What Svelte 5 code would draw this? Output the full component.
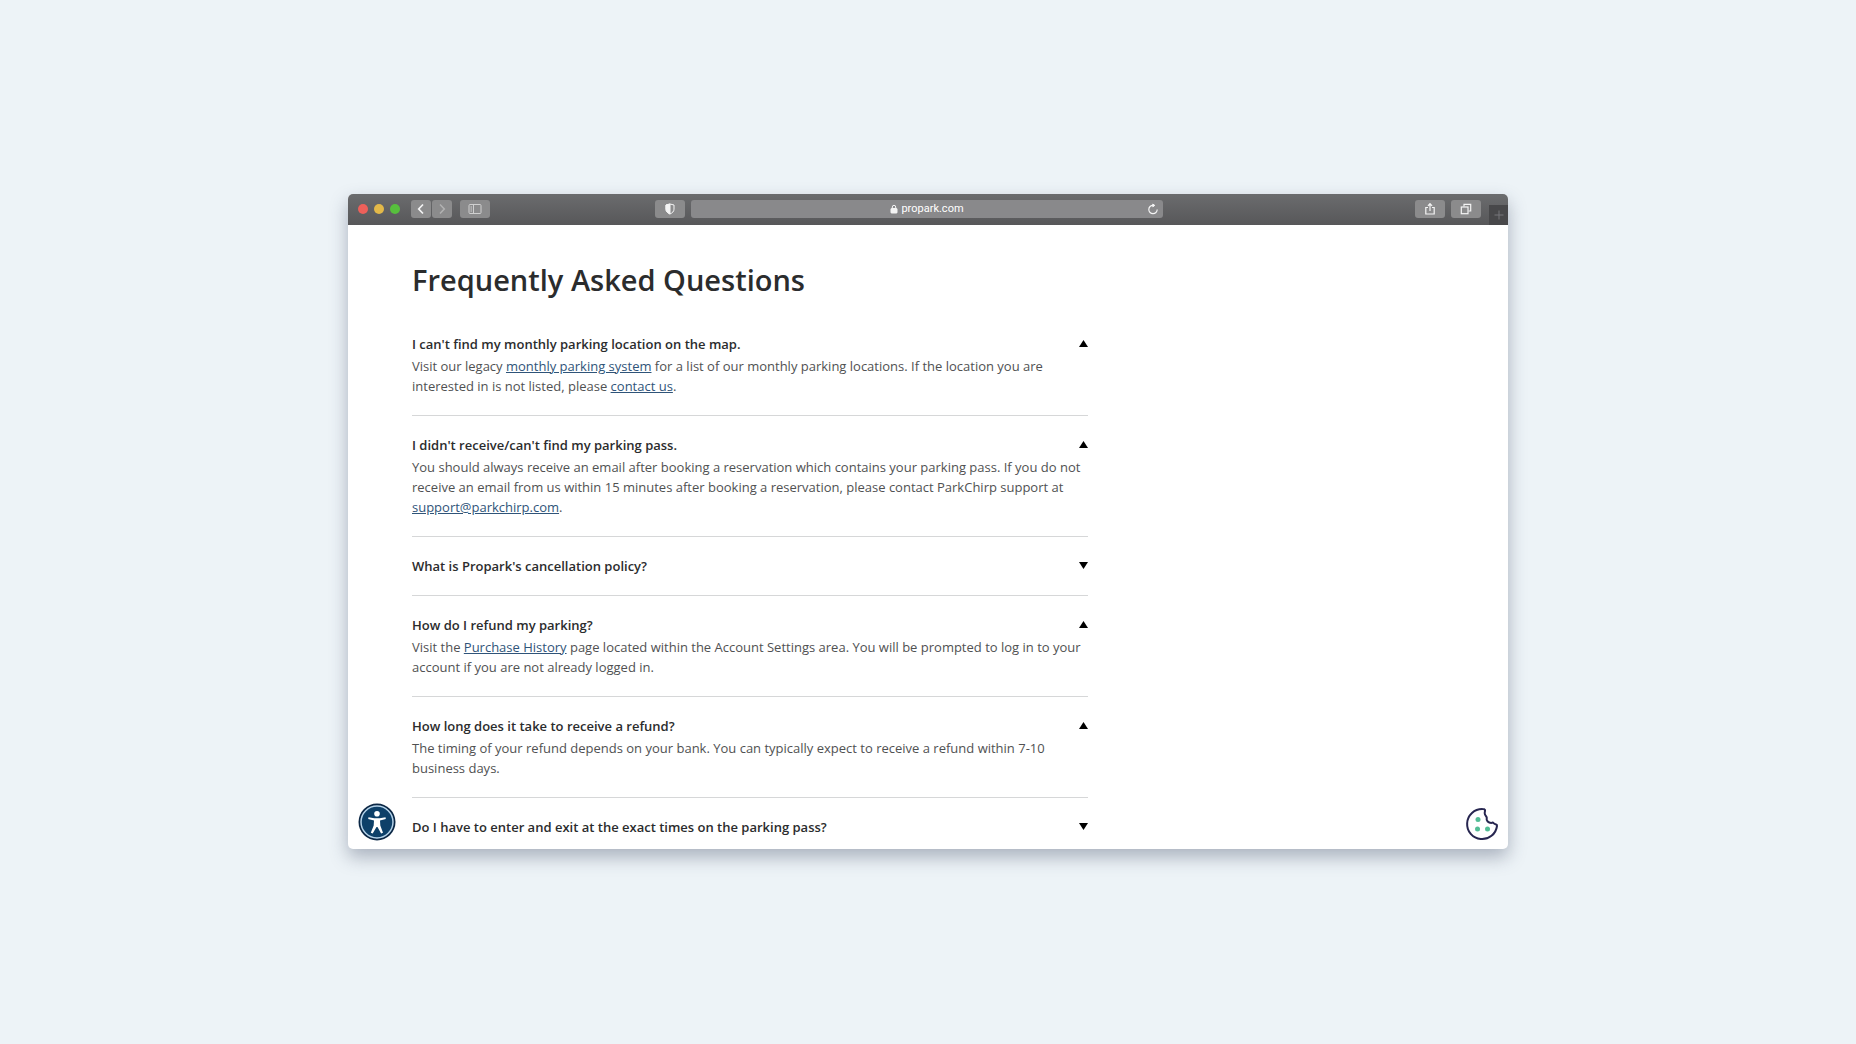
<script lang="ts">
  type Part = string | { label: string; href: string };
  type Faq = { question: string; answer: Part[]; open: boolean };

  let faqs = $state<Faq[]>([
    {
      question: "I can't find my monthly parking location on the map.",
      answer: [
        'Visit our legacy ',
        { label: 'monthly parking system', href: '#monthly' },
        ' for a list of our monthly parking locations. If the location you are interested in is not listed, please ',
        { label: 'contact us', href: '#contact' },
        '.',
      ],
      open: true,
    },
    {
      question: "I didn't receive/can't find my parking pass.",
      answer: [
        'You should always receive an email after booking a reservation which contains your parking pass. If you do not receive an email from us within 15 minutes after booking a reservation, please contact ParkChirp support at ',
        { label: 'support@parkchirp.com', href: 'mailto:support@parkchirp.com' },
        '.',
      ],
      open: true,
    },
    { question: "What is Propark's cancellation policy?", answer: [], open: false },
    {
      question: 'How do I refund my parking?',
      answer: [
        'Visit the ',
        { label: 'Purchase History', href: '#history' },
        ' page located within the Account Settings area. You will be prompted to log in to your account if you are not already logged in.',
      ],
      open: true,
    },
    {
      question: 'How long does it take to receive a refund?',
      answer: [
        'The timing of your refund depends on your bank. You can typically expect to receive a refund within 7-10 business days.',
      ],
      open: true,
    },
    {
      question: 'Do I have to enter and exit at the exact times on the parking pass?',
      answer: [],
      open: false,
    },
  ]);
</script>

<div class="desktop">
  <div class="window">
    <header class="toolbar">
      <div class="toolbar__side">
        <div class="lights">
          <button class="light light--close" aria-label="Close"></button>
          <button class="light light--min" aria-label="Minimize"></button>
          <button class="light light--max" aria-label="Zoom"></button>
        </div>
        <div class="nav">
          <button class="tool tool--nav" aria-label="Back">
            <svg width="10" height="12" viewBox="0 0 10 12"><path d="M7 1.5 2.7 6 7 10.5" stroke-width="1.7" /></svg>
          </button>
          <button class="tool tool--nav tool--dim" aria-label="Forward">
            <svg width="10" height="12" viewBox="0 0 10 12"><path d="M3 1.5 7.3 6 3 10.5" stroke-width="1.5" /></svg>
          </button>
        </div>
        <button class="tool tool--soft" aria-label="Sidebar">
          <svg width="14" height="12" viewBox="0 0 14 12">
            <rect x="1" y="1.5" width="12" height="9" rx="1" />
            <path d="M5.5 1.5v9M2.5 4H4M2.5 6H4M2.5 8H4" />
          </svg>
        </button>
      </div>

      <div class="toolbar__center">
        <button class="tool" aria-label="Privacy report">
          <svg width="12" height="12" viewBox="0 0 12 12">
            <path d="M6 1 10 2v4.2c0 2.2-1.6 3.7-4 4.8C3.6 9.9 2 8.4 2 6.2V2z" />
            <path class="fill" d="M6 1 2 2v4.2C2 8.4 3.6 9.9 6 11z" />
          </svg>
        </button>
        <div class="address">
          <a class="address__url" href="#top">
            <svg width="8" height="10" viewBox="0 0 8 10">
              <rect class="fill" x="1" y="4.5" width="6" height="4.5" rx=".5" />
              <path d="M2.3 4.8V3a1.7 1.7 0 0 1 3.4 0v1.8" />
            </svg>
            propark.com
          </a>
          <button class="reload" aria-label="Reload">
            <svg width="12" height="12" viewBox="0 0 12 12">
              <path d="M6 2.3a4.2 4.2 0 1 0 4.2 4.2" stroke-width="1.2" />
              <path class="fill" d="M5.8 1 7.8 2.4 5.8 3.8z" />
            </svg>
          </button>
        </div>
      </div>

      <div class="toolbar__side toolbar__side--end">
        <button class="tool" aria-label="Share">
          <svg width="12" height="14" viewBox="0 0 12 14">
            <path d="M4 5.5H1.8V12h8.4V5.5H8M6 9V2M3.9 3.8 6 1.7l2.1 2.1" stroke-width="1.2" />
          </svg>
        </button>
        <button class="tool" aria-label="Tabs">
          <svg width="12" height="12" viewBox="0 0 12 12">
            <path d="M4 3.5V1.3h6.7V8H8.5" stroke-width="1.2" />
            <rect x="1.3" y="4" width="6.7" height="6.7" stroke-width="1.2" />
          </svg>
        </button>
        <button class="new-tab" aria-label="New tab">
          <svg width="10" height="10" viewBox="0 0 10 10"><path d="M5 .5v9M.5 5h9" /></svg>
        </button>
      </div>
    </header>

    <main class="page">
      <h1>Frequently Asked Questions</h1>
      <div class="faqs">
        {#each faqs as faq}
          <section class="faq">
            <h2>
              <button class="faq__toggle" aria-expanded={faq.open} onclick={() => (faq.open = !faq.open)}>
                <span>{faq.question}</span>
                <svg class="caret" class:caret--down={!faq.open} width="9" height="7" viewBox="0 0 9 7">
                  <path d="M4.5 0 9 7H0z" />
                </svg>
              </button>
            </h2>
            {#if faq.open && faq.answer.length}
              <p>{#each faq.answer as part}{#if typeof part === 'string'}{part}{:else}<a href={part.href}>{part.label}</a>{/if}{/each}</p>
            {/if}
          </section>
        {/each}
      </div>
    </main>

    <button class="badge badge--access" aria-label="Accessibility options">
      <svg width="38" height="38" viewBox="0 0 38 38">
        <circle cx="19" cy="19" r="18.5" fill="#0b2745" />
        <circle cx="19" cy="19" r="16" fill="#0d4069" stroke="#b5d3ea" stroke-width="1.5" />
        <circle cx="19" cy="10.7" r="2.8" fill="#fff" />
        <path d="M10.5 14.3 16.3 15.3h5.4l5.8-1 .3 1.7-5.8 1.5.3 5 2.7 7.3-1.9.8L19.5 24h-1l-3.8 6.6-1.900-.8 2.900-7.300.3-5-5.800-1.500z" fill="#fff" />
      </svg>
    </button>
    <button class="badge badge--cookie" aria-label="Cookie settings">
      <svg width="34" height="34" viewBox="0 0 34 34">
        <path d="M17.5 2.100A15 15 0 1 0 32 19c.2-.8-.2-1.300-.9-1.500-1.300-.4-2.300-1-3.100-2-2.400 1-5.500-.1-6.200-2.500-.3-1 .1-1.800-.1-2.600-.5-1.500-2-2.200-2-4.200 0-1.600.7-2.500.2-3.500-.4-.6-1.400-.6-2.400-.6z" fill="#fff" stroke="#272650" stroke-width="2" stroke-linejoin="round" />
        <g fill="#52bd95">
          <circle cx="13" cy="12.5" r="2.5" />
          <circle cx="12.5" cy="22" r="2.5" />
          <circle cx="22.5" cy="22" r="2.5" />
        </g>
      </svg>
    </button>
  </div>
</div>

<style>
  :global(body) {
    background: #edf3f7;
  }

  button {
    padding: 0;
    border: none;
    background: none;
    font: inherit;
    color: inherit;
    cursor: pointer;
  }

  svg {
    display: block;
    flex-shrink: 0;
  }

  .desktop {
    display: flex;
    align-items: center;
    justify-content: center;
    box-sizing: border-box;
    min-height: 100vh;
    padding-bottom: 2px;
    font-family: 'Open Sans', sans-serif;
  }

  .window {
    position: relative;
    width: 62.5vw;
    border-radius: 5px;
    background: #fff;
    box-shadow: 0 8px 18px rgba(50, 60, 90, 0.36);
  }

  /* Toolbar */
  .toolbar {
    display: flex;
    align-items: center;
    height: 31px;
    border-radius: 5px 5px 0 0;
    background: linear-gradient(#6b6c6e, #575759);
    overflow: hidden;
  }

  .toolbar svg {
    fill: none;
    stroke: #f4f4f4;
  }

  .toolbar svg .fill {
    fill: #f4f4f4;
  }

  .toolbar__side {
    display: flex;
    flex: 1;
    align-items: center;
    gap: 8px;
  }

  .toolbar__side--end {
    justify-content: flex-end;
    gap: 6px;
    height: 100%;
  }

  .toolbar__center {
    display: flex;
    box-sizing: border-box;
    gap: 6px;
    width: 47%;
    padding-right: 38px;
  }

  .lights,
  .nav {
    display: flex;
  }

  .lights {
    gap: 6px;
    margin: 0 3px 0 10px;
  }

  .nav {
    gap: 1px;
  }

  .light {
    width: 10px;
    height: 10px;
    border-radius: 50%;
  }

  .light--close { background: #ed605a; }
  .light--min { background: #e3b949; }
  .light--max { background: #57bf3d; }

  .tool {
    display: flex;
    align-items: center;
    justify-content: center;
    flex-shrink: 0;
    width: 30px;
    height: 18px;
    border-radius: 3px;
    background: #8b8b8c;
  }

  .tool--nav { width: 20px; }
  .tool--dim svg { stroke: #b2b2b2; }
  .tool--soft svg { stroke: #cfcfcf; }

  .address {
    display: flex;
    flex: 1;
    align-items: center;
    height: 18px;
    padding: 0 4px 0 16px;
    border-radius: 3px;
    background: #89898b;
  }

  .address__url {
    display: flex;
    flex: 1;
    align-items: center;
    justify-content: center;
    gap: 3px;
    color: #fff;
    font: 400 11px/18px Roboto, sans-serif;
    text-decoration: none;
  }

  .new-tab {
    display: flex;
    align-items: center;
    justify-content: center;
    align-self: flex-end;
    width: 19px;
    height: 20px;
    margin-left: 2px;
    background: #48484a;
  }

  .new-tab svg { stroke: #77777a; }

  /* Page */
  .page {
    padding: 31px 64px 12px;
    color: #2b2c2d;
  }

  h1 {
    margin: 0 0 20px;
    font-size: 29px;
    font-weight: 600;
    line-height: 48px;
  }

  h2 {
    margin: 0;
    font-size: 13px;
    font-weight: 600;
    line-height: 20px;
  }

  .faqs {
    max-width: 676px;
  }

  .faq {
    padding: 19px 0;
    border-bottom: 1px solid #d6d7d8;
  }

  .faq:first-child {
    padding-top: 10px;
  }

  .faq:last-child {
    padding-bottom: 0;
    border-bottom: none;
  }

  .faq__toggle {
    display: flex;
    align-items: center;
    justify-content: space-between;
    width: 100%;
    text-align: left;
  }

  .caret { fill: #000; }
  .caret--down { transform: rotate(180deg); }

  p {
    margin: 2px 0 0;
    color: #505152;
    font-size: 13px;
    line-height: 20px;
  }

  p a {
    color: #2f5479;
  }

  /* Floating buttons */
  .badge {
    position: absolute;
    bottom: 8px;
  }

  .badge--access { left: 10px; }
  .badge--cookie { right: 9px; }
</style>
